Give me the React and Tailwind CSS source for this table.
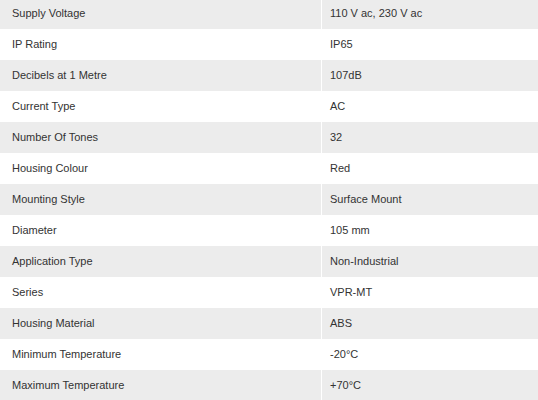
const specs = [
  ['Supply Voltage', '110 V ac, 230 V ac'],
  ['IP Rating', 'IP65'],
  ['Decibels at 1 Metre', '107dB'],
  ['Current Type', 'AC'],
  ['Number Of Tones', '32'],
  ['Housing Colour', 'Red'],
  ['Mounting Style', 'Surface Mount'],
  ['Diameter', '105 mm'],
  ['Application Type', 'Non-Industrial'],
  ['Series', 'VPR-MT'],
  ['Housing Material', 'ABS'],
  ['Minimum Temperature', '-20°C'],
  ['Maximum Temperature', '+70°C'],
];

export default function App() {
  return (
    <div className="w-[538px] h-[400px] overflow-hidden bg-white">
      <div className="-mt-[2px] text-[11px] text-[#333] font-['Liberation_Sans',Arial,sans-serif]">
        {specs.map(([label, value], i) => (
          <div
            key={label}
            className={`flex h-[31px] items-center ${i % 2 === 0 ? 'bg-[#ececec]' : 'bg-white'}`}
          >
            <div className="w-[322px] h-full flex items-center pl-3 border-r border-white">
              {label}
            </div>
            <div className="flex-1 pl-2">{value}</div>
          </div>
        ))}
      </div>
    </div>
  );
}
